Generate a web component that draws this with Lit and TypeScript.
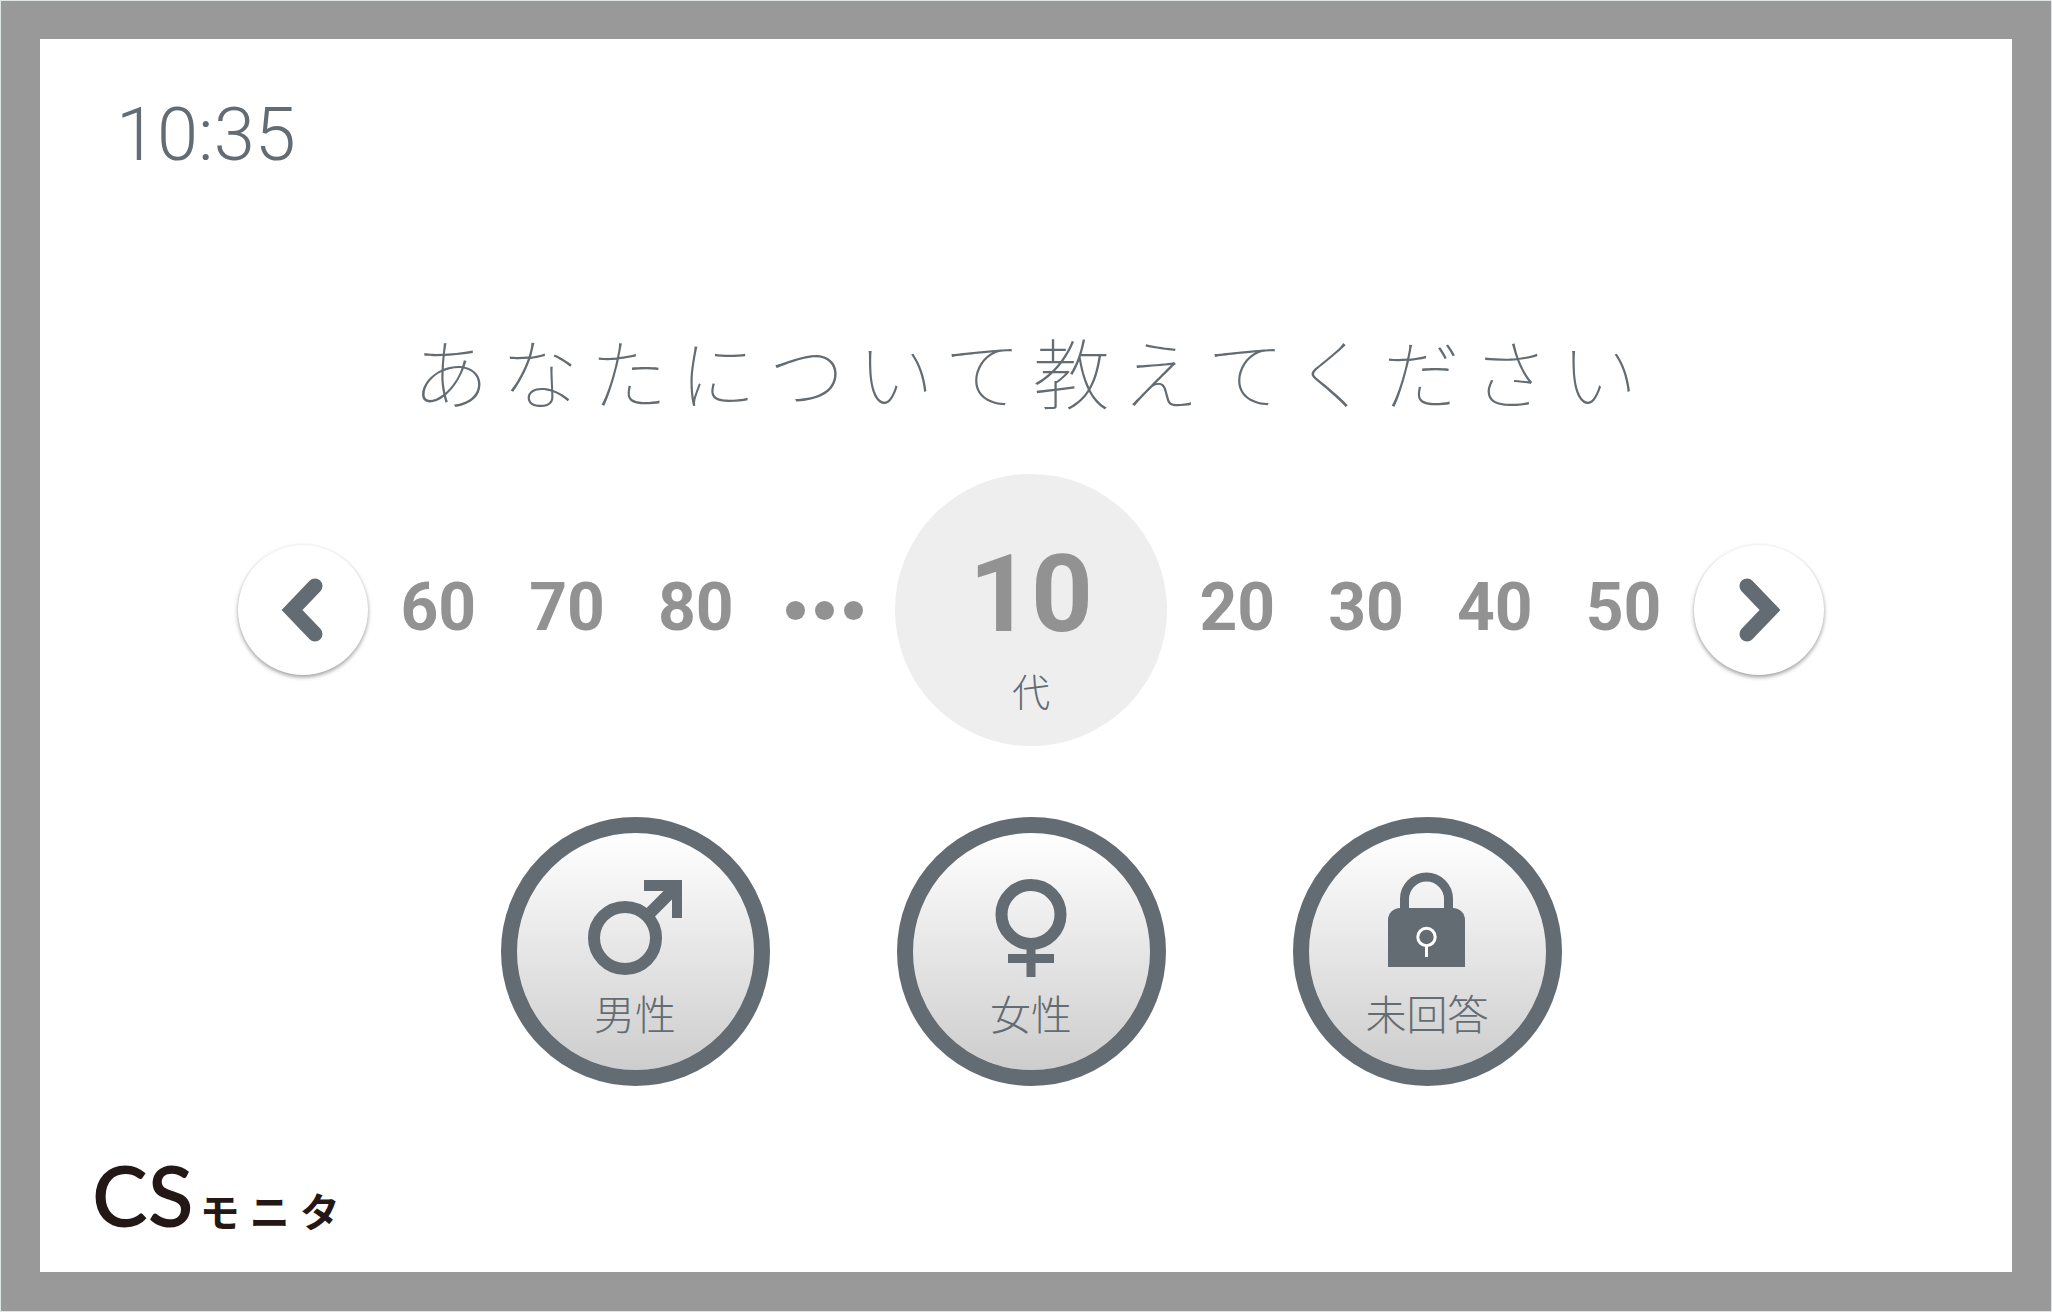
import { LitElement, html, css, svg } from "lit";
import { customElement, state } from "lit/decorators.js";

const icons = {
  male: svg`
    <circle cx="50" cy="67" r="31" fill="none" stroke="currentColor" stroke-width="12" />
    <path d="M72 45L97 20" fill="none" stroke="currentColor" stroke-width="12" />
    <path d="M69 9H107V47H97V20H69Z" fill="currentColor" />`,
  female: svg`
    <circle cx="60" cy="43.500" r="29.500" fill="none" stroke="currentColor" stroke-width="12" />
    <path d="M60 74V106M37 87.500H83" fill="none" stroke="currentColor" stroke-width="9" />`,
  lock: svg`
    <path d="M37.500 40V28a22 22 0 0 1 44 0V40" fill="none" stroke="currentColor" stroke-width="9" />
    <path d="M21 96V49a12 12 0 0 1 12-12H86a12 12 0 0 1 12 12V96Z" fill="currentColor" />
    <circle cx="59.500" cy="66" r="8.700" fill="none" stroke="#fff" stroke-width="3" />
    <path d="M59.500 76V86" stroke="#fff" stroke-width="3" />`,
};

@customElement("app-root")
export class AppRoot extends LitElement {
  @state() private age = 10;

  private readonly answers = [
    { label: "男性", icon: icons.male },
    { label: "女性", icon: icons.female },
    { label: "未回答", icon: icons.lock },
  ];

  static styles = css`
    :host {
      --ink: #636c72;
      --number: #929292;
      display: block;
      font-family: Roboto, "Noto Sans CJK JP", sans-serif;
      color: var(--ink);
    }
    * {
      box-sizing: border-box;
    }
    button {
      padding: 0;
      border: 0;
      background: none;
      color: inherit;
      font: inherit;
      cursor: pointer;
    }
    .frame {
      display: flex;
      flex-direction: column;
      min-height: 100vh;
      border: 40px solid #999;
      border-top-width: 39px;
      outline: 1px solid #dfe5e5;
      outline-offset: -1px;
      background: #fff;
    }
    .clock {
      padding: 58px 76px 0;
      font-size: 74px;
      line-height: 76px;
      font-weight: 300;
    }
    main {
      display: flex;
      flex-direction: column;
      align-items: center;
      padding: 148px 40px 40px 50px;
    }
    h1 {
      margin: 0;
      font-family: "Noto Sans CJK JP", sans-serif;
      font-size: 77px;
      line-height: 100px;
      font-weight: 100;
      letter-spacing: 12px;
      text-align: center;
    }
    .ages {
      display: flex;
      align-items: center;
      gap: 6px;
      width: 100%;
      max-width: 1586px;
      margin-top: 53px;
    }
    .arrow {
      display: grid;
      place-items: center;
      flex: none;
      width: 130px;
      height: 130px;
      border-radius: 50%;
      background: #fff;
      box-shadow: 0 2px 4px rgba(0, 0, 0, 0.4);
    }
    .group {
      display: grid;
      grid-template-columns: repeat(4, 1fr);
      flex: 1;
      align-items: center;
    }
    .age {
      padding-bottom: 4px;
      color: var(--number);
      font-size: 66px;
      line-height: 80px;
      font-weight: 700;
    }
    .more {
      display: flex;
      justify-content: center;
      gap: 10px;
    }
    .dot {
      width: 19px;
      height: 19px;
      border-radius: 50%;
      background: var(--number);
    }
    .current {
      display: flex;
      flex-direction: column;
      align-items: center;
      flex: none;
      width: 272px;
      height: 272px;
      padding-top: 64px;
      border-radius: 50%;
      background: #eee;
    }
    .value {
      color: var(--number);
      font-size: 108px;
      line-height: 112px;
      font-weight: 700;
    }
    .unit {
      margin-top: 12px;
      font-family: "Noto Sans CJK JP", sans-serif;
      font-size: 38px;
      line-height: 56px;
      font-weight: 300;
    }
    .answers {
      display: flex;
      justify-content: center;
      flex-wrap: wrap;
      gap: 127px;
      margin-top: 71px;
    }
    .answer {
      display: flex;
      flex-direction: column;
      align-items: center;
      width: 269px;
      height: 269px;
      padding-top: 38px;
      border: 16px solid var(--ink);
      border-radius: 50%;
      background: linear-gradient(#fff, #cdcdcd) padding-box;
      font-family: "Noto Sans CJK JP", sans-serif;
      font-size: 41px;
      line-height: 60px;
      font-weight: 300;
    }
    .answer svg {
      flex: none;
      margin-bottom: 3px;
    }
    footer {
      display: flex;
      align-items: baseline;
      gap: 6px;
      margin-top: auto;
      padding: 0 52px 34px;
      color: #231815;
    }
    .cs {
      font-family: Lato, sans-serif;
      font-size: 84px;
      line-height: 86px;
      font-weight: 600;
    }
    .monitor {
      font-family: "Noto Sans CJK JP", sans-serif;
      font-size: 40px;
      line-height: 48px;
      font-weight: 700;
      letter-spacing: 10px;
    }
  `;

  private ageButton(n: number) {
    return html`<button class="age" @click=${() => (this.age = n)}>${n}</button>`;
  }

  /* The age that lies a number of steps round the ring of 10 to 80. */
  private at(offset: number) {
    return ((this.age / 10 - 1 + offset + 8) % 8) * 10 + 10;
  }

  private step(by: number) {
    this.age = this.at(by);
  }

  render() {
    return html`
      <div class="frame">
        <header class="clock"><time>10:35</time></header>
        <main>
          <h1>あなたについて教えてください</h1>
          <div class="ages">
            <button class="arrow" aria-label="前へ" @click=${() => this.step(-1)}>
              <svg width="64" height="64" viewBox="0 0 64 64" fill="none" stroke="currentColor" stroke-width="15" stroke-linecap="round">
                <path d="M44 8L21 32L44 56" />
              </svg>
            </button>
            <div class="group">
              ${[-3, -2, -1].map((o) => this.ageButton(this.at(o)))}
              <span class="more"><i class="dot"></i><i class="dot"></i><i class="dot"></i></span>
            </div>
            <div class="current">
              <span class="value">${this.age}</span>
              <span class="unit">代</span>
            </div>
            <div class="group">${[1, 2, 3, 4].map((o) => this.ageButton(this.at(o)))}</div>
            <button class="arrow" aria-label="次へ" @click=${() => this.step(1)}>
              <svg width="64" height="64" viewBox="0 0 64 64" fill="none" stroke="currentColor" stroke-width="15" stroke-linecap="round">
                <path d="M20 8L43 32L20 56" />
              </svg>
            </button>
          </div>
          <div class="answers">
            ${this.answers.map(
              (a) => html`<button class="answer">
                <svg width="120" height="108" viewBox="0 0 120 108" aria-hidden="true">${a.icon}</svg>
                ${a.label}
              </button>`
            )}
          </div>
        </main>
        <footer><span class="cs">CS</span><span class="monitor">モニタ</span></footer>
      </div>
    `;
  }
}
